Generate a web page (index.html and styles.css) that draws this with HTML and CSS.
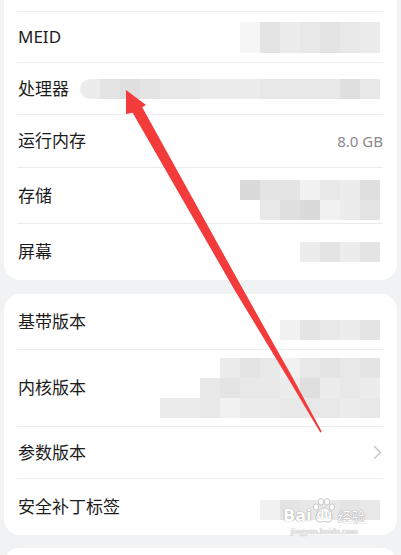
FILE: index.html
```html
<!DOCTYPE html>
<html lang="zh">
<head>
<meta charset="utf-8">
<title>关于手机</title>
<link rel="stylesheet" href="styles.css">
</head>
<body>
<div class="page">
  <div class="card cut">
    <div class="row stub"></div>
    <div class="row r51">
      <span class="label">MEID</span>
      <div class="val"><div class="strip big"><i class="c c0"></i><i class="c c3"></i><i class="c c5"></i><i class="c c4"></i><i class="c c3"></i><i class="c c4"></i><i class="c c5"></i></div></div>
    </div>
    <div class="row">
      <span class="label">处理器</span>
      <div class="val"><div class="strip round"><i class="c c5"></i><i class="c c3"></i><i class="c c2"></i><i class="c c3"></i><i class="c c4"></i><i class="c c4"></i><i class="c c5"></i><i class="c c5"></i><i class="c c5"></i><i class="c c4"></i><i class="c c4"></i><i class="c c4"></i><i class="c c4"></i><i class="c c2"></i><i class="c c4"></i></div></div>
    </div>
    <div class="row r53">
      <span class="label">运行内存</span>
      <span class="text-val">8.0 GB</span>
    </div>
    <div class="row lg">
      <span class="label">存储</span>
      <div class="val sh4">
        <div class="strip"><i class="c c1"></i><i class="c c3"></i><i class="c c3"></i><i class="c c6"></i><i class="c c4"></i><i class="c c5"></i><i class="c c2"></i></div>
        <div class="strip"><i class="c c4"></i><i class="c c2"></i><i class="c c1"></i><i class="c c6"></i><i class="c c5"></i><i class="c c3"></i></div>
      </div>
    </div>
    <div class="row lg">
      <span class="label">屏幕</span>
      <div class="val"><div class="strip"><i class="c c5"></i><i class="c c3"></i><i class="c c5"></i><i class="c c3"></i></div></div>
    </div>
  </div>

  <div class="card">
    <div class="row lg">
      <span class="label">基带版本</span>
      <div class="val sh8"><div class="strip"><i class="c c6"></i><i class="c c3"></i><i class="c c4"></i><i class="c c5"></i><i class="c c3"></i></div></div>
    </div>
    <div class="row xl">
      <span class="label">内核版本</span>
      <div class="val">
        <div class="strip"><i class="c c5"></i><i class="c c3"></i><i class="c c4"></i><i class="c c6"></i><i class="c c4"></i><i class="c c3"></i><i class="c c4"></i><i class="c c3"></i></div>
        <div class="strip"><i class="c c4"></i><i class="c c3"></i><i class="c c4"></i><i class="c c4"></i><i class="c c5"></i><i class="c c2"></i><i class="c c5"></i><i class="c c4"></i><i class="c c5"></i></div>
        <div class="strip"><i class="c c5"></i><i class="c c5"></i><i class="c c4"></i><i class="c c6"></i><i class="c c5"></i><i class="c c5"></i><i class="c c4"></i><i class="c c4"></i><i class="c c4"></i><i class="c c5"></i><i class="c c4"></i></div>
      </div>
    </div>
    <div class="row">
      <span class="label">参数版本</span>
      <svg class="chev" width="9" height="15" viewBox="0 0 9 15"><polyline points="1.5,1.5 7.5,7.5 1.5,13.5" fill="none" stroke="#c4c4c4" stroke-width="1.4" stroke-linecap="round" stroke-linejoin="round"/></svg>
    </div>
    <div class="row lg">
      <span class="label">安全补丁标签</span>
      <div class="val sh3"><div class="strip"><i class="c c6"></i><i class="c c3"></i><i class="c c4"></i><i class="c c4"></i><i class="c c3"></i><i class="c c4"></i></div></div>
    </div>
  </div>

  <div class="card open"></div>
</div>

<svg class="arrow" width="401" height="555" viewBox="0 0 401 555">
  <polygon fill="#f33b3b" points="126,90 146,105 142.2,107.3 242.3,288.1 293.4,378.9 321.7,431.6 320.3,432.4 289.6,381.1 235.7,291.9 132.6,112.7 126,114"/>
</svg>

<div class="mark">
  <div class="mark-top">
    <span class="mark-bai">Bai</span>
    <span class="paw">
      <svg width="24" height="26" viewBox="0 0 24 26">
        <g fill="#ffffff" stroke="#c8c8c8" stroke-width="1">
          <ellipse cx="4" cy="9" rx="2.6" ry="3.2"/>
          <ellipse cx="9" cy="3.8" rx="2.6" ry="3.2"/>
          <ellipse cx="15" cy="3.8" rx="2.6" ry="3.2"/>
          <ellipse cx="20" cy="9" rx="2.6" ry="3.2"/>
          <path d="M12 10 C7 10 3 17 4 21 C5 25 9 24 12 23.5 C15 24 19 25 20 21 C21 17 17 10 12 10 Z"/>
        </g>
      </svg>
      <span class="paw-du">du</span>
    </span>
    <span class="mark-jy">经验</span>
  </div>
  <div class="mark-url">jingyan.baidu.com</div>
</div>
</body>
</html>
```

FILE: styles.css
```css
* { box-sizing: border-box; }

html, body {
  margin: 0;
  padding: 0;
}

body {
  width: 401px;
  height: 555px;
  overflow: hidden;
  background: #f1f2f4;
  font-family: "Noto Sans", "Noto Sans CJK SC", sans-serif;
  color: #1c1c1c;
  position: relative;
}

.page {
  display: flex;
  flex-direction: column;
  gap: 14px;
}

.card {
  margin: 0 4px;
  padding: 0 14px 0 13px;
  background: #ffffff;
  border-radius: 16px;
  display: flex;
  flex-direction: column;
}

.card.cut {
  border-top-left-radius: 0;
  border-top-right-radius: 0;
}

.card.open {
  height: 30px;
  margin-top: -1px;
}

.row {
  height: 52px;
  display: flex;
  align-items: center;
  justify-content: space-between;
  border-bottom: 1px solid #ececec;
}

.row:last-child { border-bottom: none; }

.row.stub { height: 12px; }
.row.r51 { height: 51px; }
.row.r53 { height: 53px; }
.row.lg { height: 56px; }
.row.xl { height: 77px; }

.label {
  padding-left: 1px;
  font-size: 17px;
  line-height: 24px;
  color: #1c1c1c;
  white-space: nowrap;
}

.text-val {
  font-size: 15px;
  color: #8a8a8a;
  line-height: 20px;
}

.val {
  display: flex;
  flex-direction: column;
  align-items: flex-end;
  margin-right: 3px;
}

.val.sh3 { margin-top: 6px; }
.val.sh4 { margin-top: 8px; }
.val.sh8 { margin-top: 16px; }

.strip {
  display: flex;
  height: 20px;
}

.strip.big { height: 31px; }

.strip.round .c:first-child {
  border-radius: 10px 0 0 10px;
}

.c {
  display: block;
  width: 20px;
  height: 100%;
}

.c0 { background: #f6f6f6; }
.c1 { background: #dadada; }
.c2 { background: #dfdfdf; }
.c3 { background: #e4e4e4; }
.c4 { background: #e8e8e8; }
.c5 { background: #ececec; }
.c6 { background: #f1f1f1; }

.chev {
  margin-right: 1px;
  display: block;
}

.arrow {
  position: absolute;
  left: 0;
  top: 0;
  pointer-events: none;
}

.mark {
  position: absolute;
  left: 283px;
  top: 498px;
  display: flex;
  flex-direction: column;
  align-items: center;
  pointer-events: none;
}

.mark-top {
  display: flex;
  align-items: flex-end;
  gap: 1px;
}

.mark-bai {
  font-family: "DejaVu Sans", sans-serif;
  font-weight: bold;
  font-size: 16px;
  line-height: 16px;
  color: #ffffff;
  text-shadow: 0 0 1px #9a9a9a, 0 0 1px #9a9a9a;
}

.paw {
  position: relative;
  display: block;
  width: 24px;
  height: 26px;
}

.paw svg { display: block; }

.paw-du {
  position: absolute;
  left: 4px;
  top: 11px;
  font-family: "DejaVu Sans", sans-serif;
  font-weight: bold;
  font-size: 11px;
  line-height: 12px;
  color: #ffffff;
  text-shadow: 0 0 1px #9a9a9a, 0 0 1px #9a9a9a;
}

.mark-jy {
  font-family: "Noto Sans CJK SC", sans-serif;
  font-size: 14px;
  line-height: 16px;
  color: #ffffff;
  text-shadow: 0 0 1px #9a9a9a, 0 0 1px #9a9a9a;
}

.mark-url {
  margin-top: 2px;
  font-family: "Liberation Serif", serif;
  font-size: 9px;
  line-height: 10px;
  color: #ffffff;
  text-shadow: 0 0 1px #a0a0a0, 0 0 1px #a0a0a0;
}
```
